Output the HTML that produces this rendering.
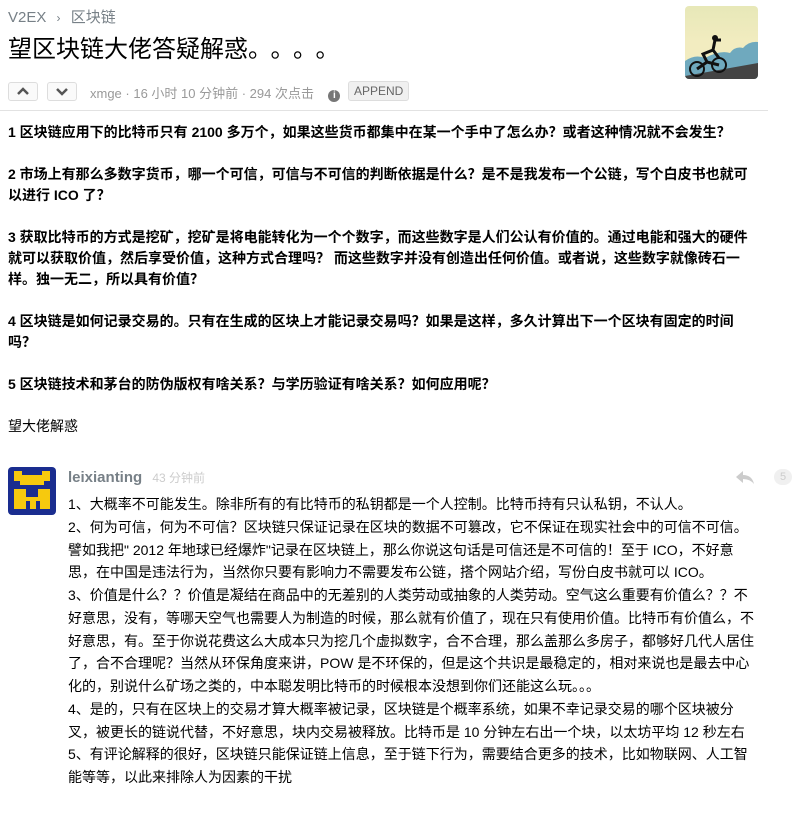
<!DOCTYPE html>
<html><head><meta charset="utf-8"><style>
body{margin:0;background:#fff;font-family:"Liberation Sans","Noto Sans CJK SC",sans-serif;color:#000;width:801px;height:820px;overflow:hidden;position:relative}
.a{position:absolute;white-space:nowrap}
.crumb{left:8px;top:6px;font-size:15px;color:#778087}
.title{left:8px;top:33px;font-size:24px;line-height:34px;color:#000}
.title i{font-style:normal;display:inline-block;width:22.5px;text-align:center}
.btn{position:absolute;top:82px;width:28px;height:17px;border:1px solid #ddd;border-radius:3px;background:#fafafa}
.meta{left:90px;top:83px;font-size:13px;color:#999}
.append{left:348px;top:81px;font-size:12px;color:#666;border:1px solid #ddd;background:#f0f0f0;border-radius:3px;padding:2px 5px}
.hr{position:absolute;left:0;top:110px;width:768px;height:1px;background:#e2e2e2}
.body{left:8px;top:122px;font-size:14px;line-height:21px;font-weight:bold;color:#000}
.body p{margin:0 0 21px}
.rep{left:68px;top:493px;font-size:14px;line-height:22.75px;color:#000}
</style></head><body>
<div class="a crumb">V2EX <span style="font-size:12px;margin:0 6px">›</span> 区块链</div>
<div class="a title">望区块链大佬答疑解惑<i>。</i><i>。</i><i>。</i><i>。</i></div>
<div style="position:absolute;left:685px;top:6px;width:73px;height:73px;border-radius:4px;overflow:hidden;background:linear-gradient(#e7e8b8,#f2ecc0 50%)">
<svg width="73" height="73" viewBox="0 0 73 73"><path d="M0 55 Q10 48 20 52 Q35 44 45 47 Q50 40 58 42 Q64 35 73 36 V73 H0Z" fill="#6fa9be"/><path d="M0 73 V70 L73 57 V73Z" fill="#444"/><circle cx="12" cy="63" r="7" fill="none" stroke="#111" stroke-width="2"/><circle cx="34" cy="59" r="7" fill="none" stroke="#111" stroke-width="2"/><path d="M12 63 L22 56 L34 59 M22 56 L18 48 L28 44 L30 34 L36 34 M28 44 L34 52" stroke="#111" stroke-width="3" fill="none"/><circle cx="30" cy="32" r="3" fill="#111"/></svg></div>
<div class="btn" style="left:8px"><svg width="28" height="17"><path d="M9 11 L14 6 L19 11" stroke="#555" stroke-width="2.5" fill="none"/></svg></div>
<div class="btn" style="left:47px"><svg width="28" height="17"><path d="M9 6 L14 11 L19 6" stroke="#555" stroke-width="2.5" fill="none"/></svg></div>
<div class="a meta">xmge · 16 小时 10 分钟前 · 294 次点击 &nbsp;&nbsp; <span style="display:inline-block;width:12px;height:12px;border-radius:50%;background:#777;color:#fff;font-size:10px;text-align:center;line-height:12px;font-weight:bold">i</span></div>
<div class="a append">APPEND</div>
<div class="hr"></div>
<div class="a body">
<p>1 区块链应用下的比特币只有 2100 多万个，如果这些货币都集中在某一个手中了怎么办？或者这种情况就不会发生？</p>
<p>2 市场上有那么多数字货币，哪一个可信，可信与不可信的判断依据是什么？是不是我发布一个公链，写个白皮书也就可<br>以进行 ICO 了？</p>
<p>3 获取比特币的方式是挖矿，挖矿是将电能转化为一个个数字，而这些数字是人们公认有价值的。通过电能和强大的硬件<br>就可以获取价值，然后享受价值，这种方式合理吗？ 而这些数字并没有创造出任何价值。或者说，这些数字就像砖石一<br>样。独一无二，所以具有价值？</p>
<p>4 区块链是如何记录交易的。只有在生成的区块上才能记录交易吗？如果是这样，多久计算出下一个区块有固定的时间<br>吗？</p>
<p>5 区块链技术和茅台的防伪版权有啥关系？与学历验证有啥关系？如何应用呢？</p>
<p style="font-weight:normal">望大佬解惑</p>
</div>
<div style="position:absolute;left:8px;top:467px;width:48px;height:48px;border-radius:4px;background:#1a2d8f">
<svg width="48" height="48"><path d="M6 4h8v4h20v-4h8v10h-6v4h-24v-4h-6z M6 22h12v8h12v-8h12v20h-10v-8h-4v8h-6v-8h-4v8h-12z" fill="#f6c90e"/></svg></div>
<div class="a" style="left:68px;top:469px;font-size:15px;font-weight:bold;color:#778087">leixianting <span style="font-size:12px;font-weight:normal;color:#ccc;margin-left:6px">43 分钟前</span></div>
<svg style="position:absolute;left:735px;top:470px" width="20" height="14"><path d="M8 1 L1 7 L8 13 V9 Q15 9 19 14 Q17 5 8 5Z" fill="#ccc"/></svg>
<div class="a" style="left:774px;top:469px;width:18px;height:16px;border-radius:8px;background:#f0f0f0;color:#ccc;font-size:11px;text-align:center;line-height:16px">5</div>
<div class="a rep">1、大概率不可能发生。除非所有的有比特币的私钥都是一个人控制。比特币持有只认私钥，不认人。<br>2、何为可信，何为不可信？区块链只保证记录在区块的数据不可篡改，它不保证在现实社会中的可信不可信。<br>譬如我把" 2012 年地球已经爆炸"记录在区块链上，那么你说这句话是可信还是不可信的！至于 ICO，不好意<br>思，在中国是违法行为，当然你只要有影响力不需要发布公链，搭个网站介绍，写份白皮书就可以 ICO。<br>3、价值是什么？？价值是凝结在商品中的无差别的人类劳动或抽象的人类劳动。空气这么重要有价值么？？不<br>好意思，没有，等哪天空气也需要人为制造的时候，那么就有价值了，现在只有使用价值。比特币有价值么，不<br>好意思，有。至于你说花费这么大成本只为挖几个虚拟数字，合不合理，那么盖那么多房子，都够好几代人居住<br>了，合不合理呢？当然从环保角度来讲，POW 是不环保的，但是这个共识是最稳定的，相对来说也是最去中心<br>化的，别说什么矿场之类的，中本聪发明比特币的时候根本没想到你们还能这么玩。。。<br>4、是的，只有在区块上的交易才算大概率被记录，区块链是个概率系统，如果不幸记录交易的哪个区块被分<br>叉，被更长的链说代替，不好意思，块内交易被释放。比特币是 10 分钟左右出一个块，以太坊平均 12 秒左右<br>5、有评论解释的很好，区块链只能保证链上信息，至于链下行为，需要结合更多的技术，比如物联网、人工智<br>能等等，以此来排除人为因素的干扰</div>
</body></html>
